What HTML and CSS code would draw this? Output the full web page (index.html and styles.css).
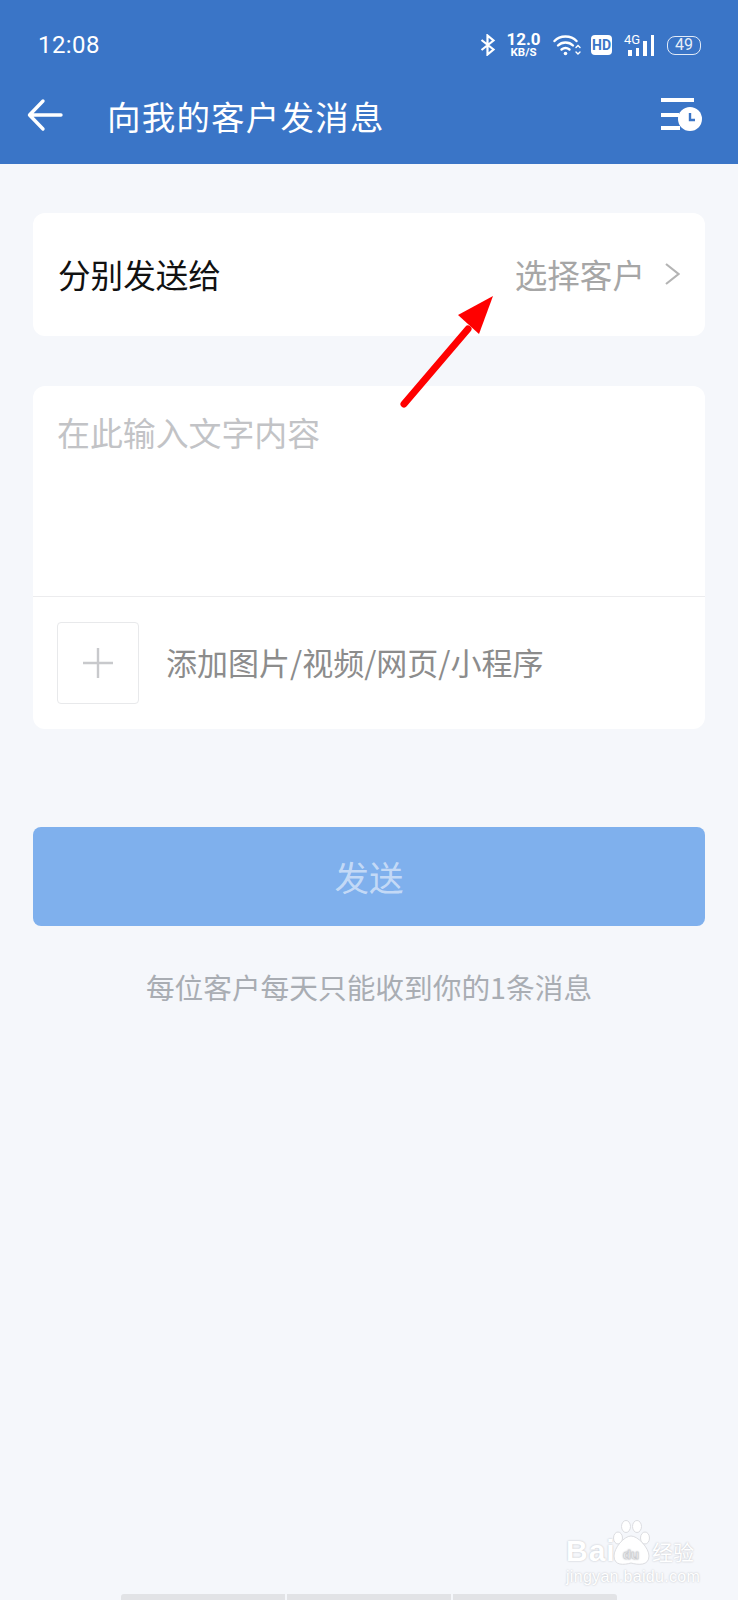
FILE: index.html
```html
<!DOCTYPE html>
<html lang="zh-CN">
<head>
    <meta charset="UTF-8">
    <meta name="viewport" content="width=device-width, initial-scale=1.0">
    <title>向我的客户发消息</title>
    <link rel="stylesheet" href="styles.css">
</head>
<body>
    <div class="page">
        <header class="header">
            <div class="statusbar">
                <span class="clock">12:08</span>
                <div class="status-icons">
                    <svg class="ic-bt" width="16" height="22" viewBox="0 0 16 22" fill="none" stroke="#fff" stroke-width="2.2">
                        <path d="M1.5 6 L13.5 15.5 L7.5 20.5 V1.5 L13.5 6.5 L1.5 16"/>
                    </svg>
                    <div class="speed">
                        <span class="speed-num">12.0</span>
                        <span class="speed-unit">KB/S</span>
                    </div>
                    <svg class="ic-wifi" width="28" height="22" viewBox="0 0 28 22" fill="none" stroke="#fff" stroke-width="2.4" stroke-linecap="round">
                        <path d="M1.5 7 C7 1 18 1 23.5 7"/>
                        <path d="M5 11.5 C9 7.5 16 7.5 20 11.5"/>
                        <path d="M8.5 15.5 C11 13.5 14 13.5 16.5 15.5"/>
                        <circle cx="12.5" cy="19.5" r="1.8" fill="#fff" stroke="none"/>
                        <path d="M23 13.5 L25 11.5 L27 13.5 M23 18 L25 20 L27 18" stroke-width="1.4"/>
                    </svg>
                    <span class="hd">HD</span>
                    <div class="signal">
                        <span class="signal-4g">4G</span>
                        <i class="bar b1"></i><i class="bar b2"></i><i class="bar b3"></i><i class="bar b4"></i>
                    </div>
                    <span class="battery">49</span>
                </div>
            </div>
            <div class="navbar">
                <svg class="back" width="36" height="34" viewBox="0 0 36 34" fill="none" stroke="#fff" stroke-width="3.4" stroke-linecap="round" stroke-linejoin="round">
                    <path d="M34 17 H3 M16 3 L2.5 17 L16 31"/>
                </svg>
                <h1 class="title">向我的客户发消息</h1>
                <svg class="history" width="42" height="34" viewBox="0 0 42 34">
                    <rect x="0" y="0" width="33" height="4" fill="#fff"/>
                    <rect x="0" y="15" width="18" height="4" fill="#fff"/>
                    <rect x="0" y="28" width="19" height="4" fill="#fff"/>
                    <circle cx="29" cy="21" r="12" fill="#fff"/>
                    <path d="M29 15 V22 H34" fill="none" stroke="#3a75c7" stroke-width="2.4"/>
                </svg>
            </div>
        </header>

        <main class="content">
            <div class="card row-target">
                <span class="target-label">分别发送给</span>
                <span class="target-value">选择客户</span>
                <svg class="chevron" width="16" height="24" viewBox="0 0 16 24" fill="none" stroke="#b4b4b4" stroke-width="2.2">
                    <path d="M2 2 L14.5 12 L2 22"/>
                </svg>
            </div>

            <div class="card composer">
                <div class="placeholder">在此输入文字内容</div>
                <div class="attach">
                    <div class="plus-box">
                        <svg width="30" height="30" viewBox="0 0 30 30" stroke="#c8c9cc" stroke-width="2.4">
                            <path d="M0 15 H30 M15 0 V30"/>
                        </svg>
                    </div>
                    <span class="attach-text">添加图片/视频/网页/小程序</span>
                </div>
            </div>

            <button class="send">发送</button>
            <p class="hint">每位客户每天只能收到你的1条消息</p>
        </main>

        <!-- 标注箭头 -->
        <svg class="annotation" width="100" height="118" viewBox="0 0 100 118">
            <path d="M6 110 L70 35" stroke="#f00" stroke-width="7" stroke-linecap="round"/>
            <polygon points="95,2 60,21 81,40" fill="#f00"/>
        </svg>

        <div class="watermark">
            <div class="wm-top">
                <span class="wm-bai">Bai</span>
                <svg class="wm-paw" width="40" height="46" viewBox="0 0 40 46" fill="#fff" stroke="#dcdde1" stroke-width="1">
                    <ellipse cx="7" cy="18" rx="4.5" ry="6"/>
                    <ellipse cx="15" cy="6.5" rx="4.5" ry="6"/>
                    <ellipse cx="26" cy="6.5" rx="4.5" ry="6"/>
                    <ellipse cx="34" cy="18" rx="4.5" ry="6"/>
                    <path d="M20 16 C13 16 3 28 3 36 C3 46 13 45 20 43 C27 45 38 46 38 36 C38 28 27 16 20 16 Z"/>
                    <text x="20" y="39" class="wm-du">du</text>
                </svg>
                <span class="wm-cn">经验</span>
            </div>
            <div class="wm-url">jingyan.baidu.com</div>
        </div>

        <div class="home-bar">
            <i></i><i></i><i></i>
        </div>
    </div>
</body>
</html>
```

FILE: styles.css
```css
* {
    box-sizing: border-box;
}
body {
    margin: 0;
    background: #f5f7fb;
    font-family: "Noto Sans CJK SC", "Noto Sans", sans-serif;
}
.page {
    position: relative;
    width: 738px;
    height: 1600px;
    overflow: hidden;
}

/* header */
.header {
    height: 164px;
    background: #3a75c7;
    color: #fff;
}
.statusbar {
    height: 90px;
    padding: 0 37px 0 38px;
    display: flex;
    align-items: center;
    justify-content: space-between;
}
.clock {
    font-family: Roboto, sans-serif;
    font-size: 24px;
    letter-spacing: 0.4px;
}
.status-icons {
    display: flex;
    align-items: center;
}
.ic-bt {
    margin-right: 11px;
}
.speed {
    display: flex;
    flex-direction: column;
    align-items: center;
    font-family: Roboto, sans-serif;
    font-weight: 700;
    width: 33px;
    margin-right: 13px;
}
.speed-num {
    font-size: 17px;
    line-height: 15px;
}
.speed-unit {
    font-size: 11.5px;
    line-height: 11px;
}
.ic-wifi {
    margin-right: 10px;
}
.hd {
    width: 21px;
    height: 20px;
    border-radius: 4px;
    background: #fff;
    color: #3a75c7;
    font: 700 14px/20px Roboto, sans-serif;
    text-align: center;
    margin-right: 12px;
}
.signal {
    position: relative;
    width: 30px;
    height: 21px;
    display: flex;
    align-items: flex-end;
    justify-content: flex-end;
    gap: 4px;
    margin-right: 13px;
}
.signal-4g {
    position: absolute;
    left: 0;
    top: -2px;
    font: 400 13px/13px Roboto, sans-serif;
}
.bar {
    width: 3.5px;
    background: #fff;
}
.b1 { height: 6px; }
.b2 { height: 8px; }
.b3 { height: 15px; }
.b4 { height: 21px; }
.battery {
    width: 34px;
    height: 19px;
    border: 1.5px solid rgba(255, 255, 255, 0.85);
    border-radius: 8px;
    font: 400 16px/16px Roboto, sans-serif;
    text-align: center;
    color: rgba(255, 255, 255, 0.9);
}
.navbar {
    height: 74px;
    display: flex;
    align-items: flex-start;
    padding: 8px 35px 0 27px;
}
.title {
    margin: -7px 0 0 44px;
    flex: 1;
    font-size: 33.5px;
    line-height: 50px;
    font-weight: 400;
    letter-spacing: 1.2px;
}
.history {
    flex-shrink: 0;
}

/* content */
.content {
    padding: 49px 33px 0;
}
.card {
    background: #fff;
    border-radius: 12px;
}
.row-target {
    height: 123px;
    padding: 0 25px 2px 25px;
    display: flex;
    align-items: center;
}
.target-label {
    flex: 1;
    font-size: 32.6px;
    color: #111;
}
.target-value {
    font-size: 32.6px;
    color: #a6a6a6;
    margin-right: 19px;
}
.composer {
    height: 343px;
    margin-top: 50px;
    display: flex;
    flex-direction: column;
}
.placeholder {
    height: 211px;
    padding: 22px 24px 0;
    font-size: 32.9px;
    line-height: 48px;
    color: #c2c3c6;
    border-bottom: 1px solid #ececee;
}
.attach {
    flex: 1;
    display: flex;
    align-items: center;
    padding: 0 24px 1px;
}
.plus-box {
    width: 82px;
    height: 82px;
    border: 1px solid #e8e9eb;
    border-radius: 4px;
    display: flex;
    align-items: center;
    justify-content: center;
}
.attach-text {
    margin: 0 0 2px 27px;
    font-size: 31px;
    color: #8c8c8c;
}
.send {
    display: block;
    width: 100%;
    height: 99px;
    margin-top: 98px;
    padding: 0 0 2px;
    border: none;
    border-radius: 8px;
    background: #7fb0ed;
    color: rgba(255, 255, 255, 0.55);
    font-family: inherit;
    font-size: 34.5px;
}
.hint {
    margin: 38px 0 0;
    text-align: center;
    font-size: 28.7px;
    line-height: 46px;
    color: #a9adb3;
}

/* 叠加层 */
.annotation {
    position: absolute;
    left: 398px;
    top: 294px;
}
.watermark {
    position: absolute;
    left: 566px;
    top: 1520px;
    width: 134px;
    color: #fff;
    text-shadow: 0 0 2px #b9bbc0;
}
.wm-top {
    display: flex;
    align-items: flex-end;
    height: 46px;
}
.wm-bai {
    font: 700 30px/30px "Liberation Sans", sans-serif;
    width: 45px;
    letter-spacing: 1px;
}
.wm-du {
    font: 700 13px "Liberation Sans", sans-serif;
    text-anchor: middle;
    fill: #fff;
    stroke: #c9cace;
    stroke-width: 0.5;
}
.wm-cn {
    font-size: 21px;
    line-height: 30px;
    margin-left: 1px;
    white-space: nowrap;
}
.wm-url {
    margin-top: 1px;
    font: 400 16px/20px "Liberation Sans", sans-serif;
    letter-spacing: 0.3px;
    white-space: nowrap;
}
.home-bar {
    position: absolute;
    left: 121px;
    bottom: 0;
    width: 496px;
    height: 6px;
    display: flex;
    gap: 1.5px;
}
.home-bar i {
    flex: 1;
    background: #e2e3e6;
}
.home-bar i:first-child {
    border-radius: 3px 0 0 0;
}
.home-bar i:last-child {
    border-radius: 0 3px 0 0;
}
```
